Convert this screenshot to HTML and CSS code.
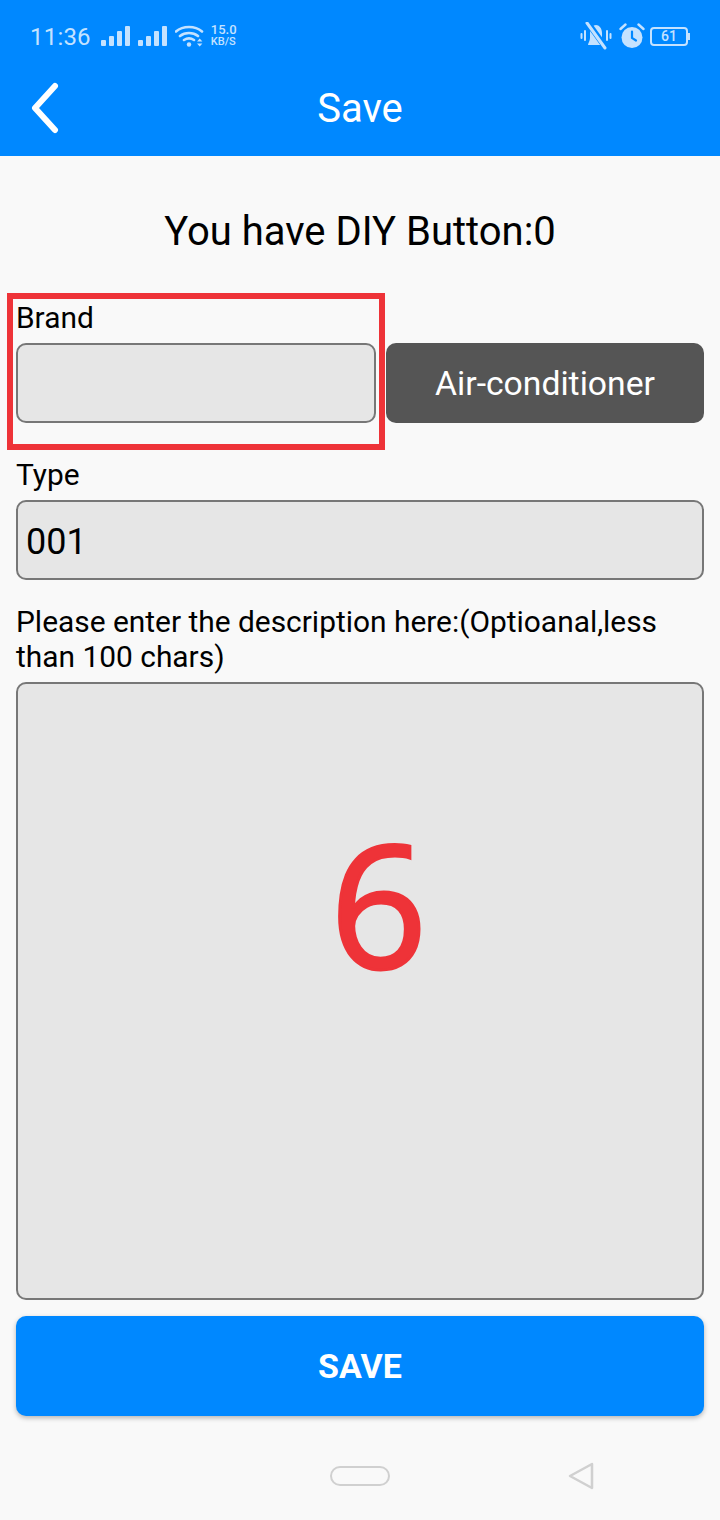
FILE: index.html
```html
<!DOCTYPE html>
<html lang="en">
<head>
    <meta charset="UTF-8">
    <meta name="viewport" content="width=device-width, initial-scale=1.0">
    <title>Save</title>
    <link rel="stylesheet" href="styles.css">
</head>
<body>
    <div class="header">
        <div class="status">
            <span class="time">11:36</span>
            <svg class="signal" width="30" height="20" viewBox="0 0 30 20"><rect x="0" y="14" width="5" height="6" rx="1"/><rect x="8" y="10" width="5" height="10" rx="1"/><rect x="16" y="5" width="5" height="15" rx="1"/><rect x="24" y="0" width="5" height="20" rx="1"/></svg>
            <svg class="signal" width="30" height="20" viewBox="0 0 30 20"><rect x="0" y="14" width="5" height="6" rx="1"/><rect x="8" y="10" width="5" height="10" rx="1"/><rect x="16" y="5" width="5" height="15" rx="1"/><rect x="24" y="0" width="5" height="20" rx="1"/></svg>
            <svg class="wifi" width="30" height="22" viewBox="0 0 30 22"><path d="M1 6.500C8 .5 20 .5 27 6.500M5 11c5-4 13-4 18 0M9 15c3-2 7-2 10 0" fill="none" stroke="#c4e2ff" stroke-width="2.600" stroke-linecap="round"/><circle cx="14" cy="19.500" r="2.200" fill="#c4e2ff"/><path d="M22 16.500l2.700-3 2.700 3zM22 18.500l2.700 3 2.700-3z" fill="#c4e2ff"/></svg>
            <div class="speed"><span>15.0</span><span class="unit">KB/S</span></div>
            <div class="status-right">
                <svg class="bell" width="32" height="28" viewBox="0 0 32 28"><path d="M8 23c0-2 2-4 2-7v-5c0-5 3-8 6-8s6 3 6 8v5c0 3 2 5 2 7z" fill="#c4e2ff"/><path d="M8 1l18 25" stroke="#0088ff" stroke-width="6"/><path d="M7 1l18 25" stroke="#c4e2ff" stroke-width="3" stroke-linecap="round"/><path d="M5 9v9M1.500 12v4M27 9v9M30.500 12v4" stroke="#c4e2ff" stroke-width="2" stroke-linecap="round"/></svg>
                <svg class="alarm" width="26" height="26" viewBox="0 0 26 26"><circle cx="13" cy="14.500" r="10.500" fill="#c4e2ff"/><path d="M13 8.500v6.500l4 2.500" fill="none" stroke="#0088ff" stroke-width="2.200" stroke-linecap="round"/><path d="M1.500 6l5-4.500M24.500 6l-5-4.500" stroke="#c4e2ff" stroke-width="2.400" stroke-linecap="round"/></svg>
                <div class="battery"><span class="battery-body">61</span><span class="battery-tip"></span></div>
            </div>
        </div>
        <div class="toolbar">
            <svg class="back" width="30" height="52" viewBox="0 0 30 52"><path d="M25 4L5 26l20 22" fill="none" stroke="#fff" stroke-width="6" stroke-linecap="round" stroke-linejoin="round"/></svg>
            <span class="title">Save</span>
        </div>
    </div>

    <div class="content">
        <h1 class="count">You have DIY Button:0</h1>

        <div class="brand-row">
            <div class="brand-col">
                <label class="label">Brand</label>
                <input class="field" type="text">
            </div>
            <button class="type-btn">Air-conditioner</button>
            <div class="mark-box"></div>
        </div>

        <label class="label type-label">Type</label>
        <input class="field" type="text" value="001">

        <label class="label desc-label">Please enter the description here:(Optioanal,less than 100 chars)</label>
        <div class="desc-wrap">
            <textarea class="field desc"></textarea>
            <span class="mark-num">6</span>
        </div>

        <button class="save-btn">SAVE</button>
    </div>

    <div class="navbar">
        <span class="nav-home"></span>
        <svg class="nav-back" width="28" height="30" viewBox="0 0 28 30"><path d="M25 3L3 15l22 12z" fill="none" stroke="#d0d0d0" stroke-width="2.500" stroke-linejoin="round"/></svg>
    </div>
</body>
</html>
```

FILE: styles.css
```css
* { box-sizing: border-box; }
html, body { margin: 0; }
body { width: 720px; height: 1520px; background: #f9f9f9; font-family: Roboto, sans-serif; color: #000; overflow: hidden; }

.header { height: 156px; background: #0088ff; padding-top: 18px; }
.status { display: flex; align-items: center; height: 36px; padding-left: 30px; color: #c4e2ff; }
.time { font-size: 24px; letter-spacing: 0.2px; margin-right: 10px; padding-top: 2px; }
.signal { fill: #c4e2ff; margin-right: 7px; }
.wifi { margin-right: 6px; }
.speed { display: flex; flex-direction: column; font-size: 13px; line-height: 12px; font-weight: 500; }
.speed .unit { font-size: 11px; }
.status-right { display: flex; align-items: center; gap: 5px; margin-left: auto; padding-right: 30px; }
.bell { margin-right: 2px; }
.battery { display: flex; align-items: center; }
.battery-body { width: 38px; height: 19px; border: 2px solid #c4e2ff; border-radius: 4px; font-size: 14px; font-weight: 500; line-height: 15px; text-align: center; }
.battery-tip { width: 2px; height: 7px; background: #c4e2ff; }

.toolbar { position: relative; display: flex; align-items: center; justify-content: center; height: 102px; padding-top: 6px; }
.back { position: absolute; left: 30px; top: 28px; }
.title { color: #fff; font-size: 40px; }

.content { padding: 0 16px; }
.count { margin: 54px 0 0; height: 43px; font-size: 40px; line-height: 44px; font-weight: 400; text-align: center; }

.brand-row { position: relative; display: flex; align-items: flex-end; gap: 10px; margin-top: 47px; }
.brand-col { width: 360px; }
.label { display: block; font-size: 29.9px; line-height: 35px; }
.brand-col .label { margin-bottom: 8px; }
.field { display: block; width: 100%; height: 80px; padding: 3px 8px 0; background: #e6e6e6; border: 2px solid #777; border-radius: 10px; font-family: Roboto, sans-serif; font-size: 36px; color: #000; outline: none; }
.type-btn { flex: 1; height: 80px; background: #555; color: #fff; border: none; border-radius: 10px; font-family: Roboto, sans-serif; font-size: 33.7px; }
.mark-box { position: absolute; left: -9px; top: -7px; width: 378px; height: 157px; border: 6px solid #ee3338; }

.type-label { margin-top: 34px; margin-bottom: 8px; }
.desc-label { margin-top: 24px; margin-bottom: 8px; }
.desc-wrap { position: relative; }
.desc { height: 618px; resize: none; }
.mark-num { position: absolute; left: 314px; top: 90px; font-family: "Open Sans", sans-serif; font-size: 170px; line-height: 260px; color: #ee3338; -webkit-text-stroke: 3px #ee3338; }

.save-btn { display: block; width: 100%; height: 100px; margin-top: 16px; background: #0088ff; color: #fff; border: none; border-radius: 10px; font-family: Roboto, sans-serif; font-size: 34px; font-weight: 700; box-shadow: 0 2px 5px rgba(0, 0, 0, 0.28); }

.navbar { position: relative; height: 104px; }
.nav-home { position: absolute; left: 330px; top: 50px; width: 60px; height: 20px; border: 2px solid #d0d0d0; border-radius: 10px; }
.nav-back { position: absolute; left: 567px; top: 45px; }
```
